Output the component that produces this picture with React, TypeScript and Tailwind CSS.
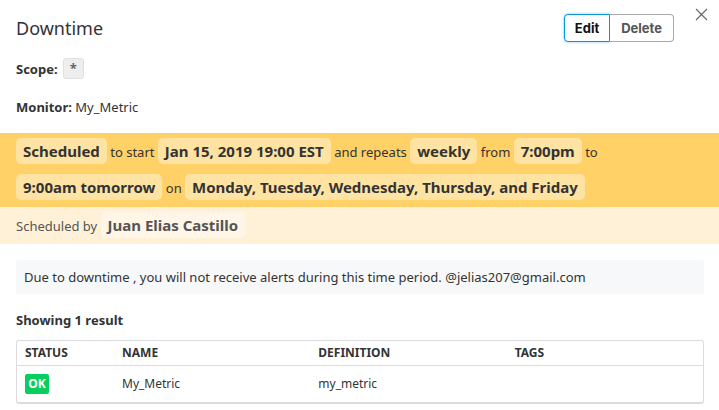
import type { ReactNode } from "react";

function Pill({ children }: { children: ReactNode }) {
  return (
    <strong className="inline-block rounded-[5px] bg-white/40 px-[7px] text-[15px] leading-[26px] font-bold">
      {children}
    </strong>
  );
}

const columns = [
  { label: "STATUS", width: "w-[97px]" },
  { label: "NAME", width: "w-auto" },
  { label: "DEFINITION", width: "w-auto" },
  { label: "TAGS", width: "w-auto" },
];

const results = [{ status: "OK", name: "My_Metric", definition: "my_metric", tags: "" }];

export default function App() {
  return (
    <main className="relative bg-white font-['Noto_Sans',sans-serif] text-[13px] leading-5 text-[#333]">
      <button type="button" aria-label="Close" className="absolute top-2 right-[11px] text-[#666]">
        <svg className="block size-[13px]" viewBox="0 0 13 13" fill="none" stroke="currentColor" strokeWidth="1.1">
          <path d="M1 1l11 11M12 1L1 12" />
        </svg>
      </button>

      <header className="flex items-center justify-between pt-3.5 pr-[45px] pl-4">
        <h1 className="text-[18px] leading-7">Downtime</h1>
        <div className="flex font-['Inter',sans-serif] text-[13px] font-bold">
          <button
            type="button"
            className="h-7 rounded-l border border-[#0a95d5] bg-white px-2.5 text-[#111] shadow-[0_0_3px_#7cc8ee]"
          >
            Edit
          </button>
          <button type="button" className="h-7 rounded-r border border-l-0 border-[#aaa] bg-white px-[11px] text-[#555]">
            Delete
          </button>
        </div>
      </header>

      <section className="px-4 pt-4 pb-4">
        <p className="flex items-center gap-[5px]">
          <strong>Scope:</strong>
          <span className="rounded-[3px] border border-[#e0e0e0] bg-[#eee] px-1.5 text-[13px] leading-[19px] font-bold text-[#666]">
            *
          </span>
        </p>
        <p className="mt-[18px]">
          <strong>Monitor:</strong> My_Metric
        </p>
      </section>

      <section>
        <p className="bg-[#ffd166] px-4 py-px leading-9">
          <Pill>Scheduled</Pill> to start <Pill>Jan 15, 2019 19:00 EST</Pill> and repeats <Pill>weekly</Pill> from{" "}
          <Pill>7:00pm</Pill> to <Pill>9:00am tomorrow</Pill> on{" "}
          <Pill>Monday, Tuesday, Wednesday, Thursday, and Friday</Pill>
        </p>
        <p className="bg-[#fff1d8] px-4 pt-px leading-9 text-[#555]">
          Scheduled by <Pill>Juan Elias Castillo</Pill>
        </p>
      </section>

      <section className="pt-4 pr-[15px] pb-1.5 pl-4">
        <p className="rounded-[3px] bg-[#f7f8fa] px-2 py-[7px]">
          Due to downtime , you will not receive alerts during this time period. @jelias207@gmail.com
        </p>
        <h2 className="mt-4 mb-2.5 font-bold">Showing 1 result</h2>
        <div className="rounded-[3px] border border-b-2 border-[#dcdce0]">
          <table className="w-full table-fixed text-left text-[12px] leading-5">
            <thead>
              <tr className="border-b border-[#dcdce0]">
                {columns.map((column) => (
                  <th key={column.label} className={`${column.width} px-2 py-0.5 font-bold`}>
                    {column.label}
                  </th>
                ))}
              </tr>
            </thead>
            <tbody>
              {results.map((row) => (
                <tr key={row.name}>
                  <td className="px-2 py-2">
                    <span className="block w-6 rounded-[2px] bg-[#06cf5d] text-center font-bold text-white">
                      {row.status}
                    </span>
                  </td>
                  <td className="px-2 py-2">{row.name}</td>
                  <td className="px-2 py-2">{row.definition}</td>
                  <td className="px-2 py-2">{row.tags}</td>
                </tr>
              ))}
            </tbody>
          </table>
        </div>
      </section>
    </main>
  );
}
